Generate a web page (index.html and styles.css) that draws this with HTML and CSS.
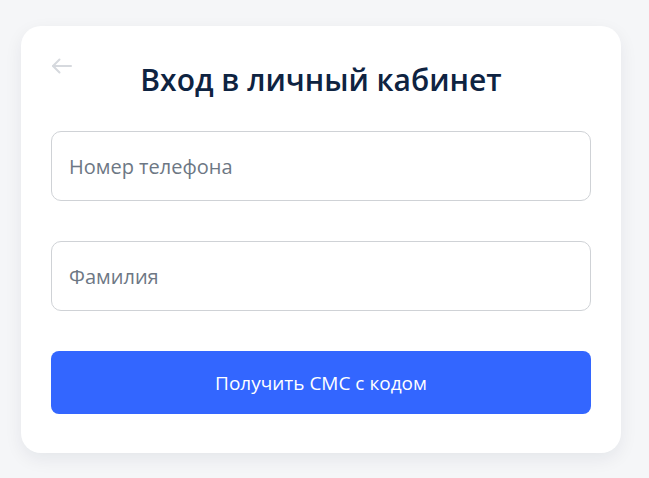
FILE: index.html
```html
<!DOCTYPE html>
<html lang="ru">
<head>
<meta charset="utf-8">
<title>Вход в личный кабинет</title>
<link rel="stylesheet" href="styles.css">
</head>
<body>
<main class="card">
  <div class="header">
    <button class="back" type="button" aria-label="Назад">
      <svg width="22" height="16" viewBox="0 0 22 16" fill="none" stroke="currentColor" stroke-width="2" stroke-linecap="round" stroke-linejoin="round">
        <path d="M20 8H2"/>
        <path d="M8.5 1.5L2 8l6.5 6.5"/>
      </svg>
    </button>
    <h1 class="title">Вход в личный кабинет</h1>
    <span></span>
  </div>
  <form class="form">
    <input class="field" type="tel" placeholder="Номер телефона">
    <input class="field" type="text" placeholder="Фамилия">
    <button class="submit" type="button">Получить СМС с кодом</button>
  </form>
</main>
</body>
</html>
```

FILE: styles.css
```css
* { box-sizing: border-box; }
html, body { height: 100%; }
body {
  margin: 0;
  background: #f5f6f8;
  font-family: "Open Sans", "Noto Sans", sans-serif;
  padding: 26px 0 0 21px;
}
.card {
  width: 600px;
  background: #fff;
  border-radius: 20px;
  box-shadow: 0 6px 18px rgba(20, 30, 60, 0.07);
  padding: 36px 30px 39px;
}
.header {
  display: grid;
  grid-template-columns: 1fr auto 1fr;
  align-items: start;
  margin-bottom: 33px;
}
.back {
  justify-self: start;
  margin: -4px 0 0 0;
  padding: 0;
  border: 0;
  background: none;
  color: #d6d9de;
  line-height: 0;
  cursor: pointer;
}
.title {
  margin: 0;
  font-size: 30px;
  line-height: 36px;
  font-weight: 600;
  color: #0e2341;
  white-space: nowrap;
}
.form {
  display: flex;
  flex-direction: column;
  gap: 40px;
}
.field {
  height: 70px;
  border: 1px solid #cfd2d6;
  border-radius: 10px;
  padding: 0 17px;
  font-family: inherit;
  font-size: 20px;
  color: #0e2341;
  outline: none;
}
.field::placeholder { color: #6d7784; }
.submit {
  height: 63px;
  border: 0;
  border-radius: 8px;
  background: #3366ff;
  color: #fff;
  font-family: inherit;
  font-size: 19px;
  font-weight: 400;
  cursor: pointer;
}
```
